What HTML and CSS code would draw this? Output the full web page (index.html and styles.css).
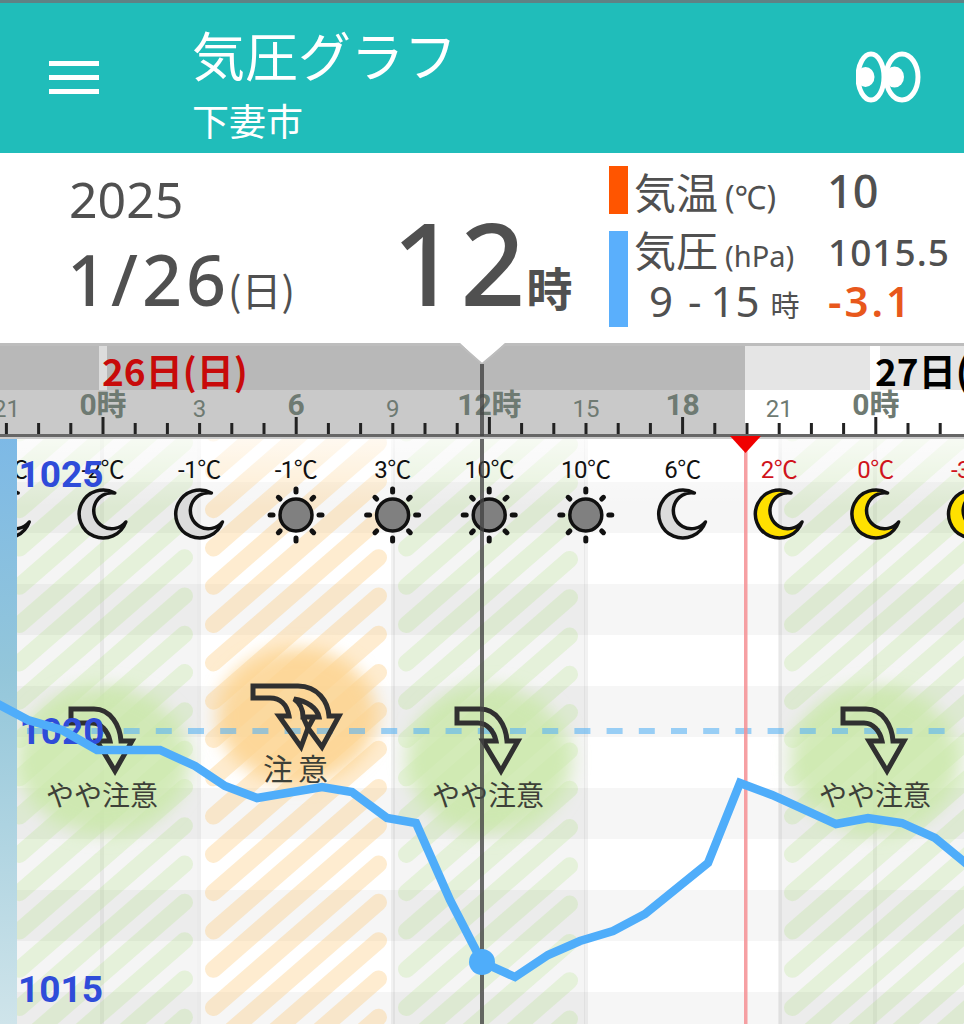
FILE: index.html
```html
<!DOCTYPE html>
<html lang="ja">
<head>
    <meta charset="UTF-8">
    <meta name="viewport" content="width=device-width, initial-scale=1.0">
    <title>気圧グラフ</title>
    <link rel="stylesheet" href="styles.css">
    <script src="chart.js"></script>
</head>
<body>
    <div id="appbar">
        <div class="menu"><span></span><span></span><span></span></div>
        <div class="title">
            <div class="title-main">気圧グラフ</div>
            <div class="title-sub">下妻市</div>
        </div>
        <svg class="eyes" width="66" height="54" viewBox="0 0 66 54">
            <ellipse cx="15" cy="27" rx="13" ry="23"></ellipse>
            <ellipse cx="46" cy="27" rx="16" ry="23"></ellipse>
            <ellipse class="pupil" cx="9.5" cy="27" rx="9" ry="10"></ellipse>
            <ellipse class="pupil" cx="38.5" cy="27" rx="9.5" ry="10.5"></ellipse>
        </svg>
    </div>
    <div id="info">
        <div class="date">
            <div class="year">2025</div>
            <div class="day">1/26<small>(日)</small></div>
        </div>
        <div class="hour">12<small>時</small></div>
        <div class="legend">
            <div class="row temp">
                <div class="bar bar-temp"></div>
                <div class="cells">
                    <div class="line">
                        <span class="label">気温<small class="unit-temp">(℃)</small></span>
                        <span class="value value-temp">10</span>
                    </div>
                </div>
            </div>
            <div class="row press">
                <div class="bar bar-press"></div>
                <div class="cells">
                    <div class="line line-press">
                        <span class="label">気圧<small>(hPa)</small></span>
                        <span class="value">1015.5</span>
                    </div>
                    <div class="line line-range">
                        <span class="label range">9 -&#8201;15<small>時</small></span>
                        <span class="value diff">-3.1</span>
                    </div>
                </div>
            </div>
        </div>
    </div>
    <svg id="graph" width="964" height="681" viewBox="0 343 964 681"></svg>
</body>
</html>
```

FILE: styles.css
```css
html, body{
    margin: 0;
    padding: 0;
    background: white;
}
body{
    width: 964px;
    height: 1024px;
    overflow: hidden;
    font-family: "Noto Sans", "Noto Sans CJK JP", sans-serif;
    color: #505050;
}
#appbar{
    height: 150px;
    border-top: 3px solid #5f8285;
    background: #20bdba;
    display: flex;
    align-items: flex-start;
    color: white;
    font-family: "Noto Sans CJK JP", sans-serif;
}
.menu{
    width: 50px;
    margin: 58px 0 0 49px;
    display: flex;
    flex-direction: column;
    gap: 9px;
}
.menu span{
    height: 5px;
    background: white;
}
.title{
    margin-left: 93px;
    padding-top: 16px;
}
.title-main{
    font-size: 53px;
    line-height: 70px;
    font-weight: 400;
    white-space: nowrap;
}
.title-sub{
    font-size: 37px;
    line-height: 48px;
    margin-top: 7px;
    font-weight: 400;
}
.eyes{
    margin: 47px 0 0 auto;
    margin-right: 42px;
}
.eyes ellipse{
    fill: none;
    stroke: white;
    stroke-width: 5px;
}
.eyes .pupil{
    fill: white;
    stroke: none;
}
#info{
    height: 190px;
    display: flex;
    background: white;
}
.date{
    width: 328px;
    padding: 16px 0 0 69px;
    box-sizing: border-box;
}
.year{
    font-size: 50px;
    line-height: 60px;
}
.day{
    font-size: 70px;
    line-height: 84px;
    margin: 8px 0 0 -2px;
    white-space: nowrap;
    font-weight: 500;
    letter-spacing: 4px;
}
.day small{
    font-size: 40px;
    font-weight: 400;
    margin-left: -2px;
    letter-spacing: 0;
    font-family: "Noto Sans CJK JP", sans-serif;
}
.hour{
    width: 281px;
    font-size: 114px;
    line-height: 128px;
    padding: 45px 0 0 64px;
    box-sizing: border-box;
    white-space: nowrap;
    font-weight: 500;
    letter-spacing: 3px;
}
.hour small{
    font-size: 46px;
    font-weight: 700;
    margin-left: -2px;
    letter-spacing: 0;
    font-family: "Noto Sans CJK JP", sans-serif;
}
.legend{
    flex: 1;
    padding-top: 13px;
    display: flex;
    flex-direction: column;
    gap: 17px;
}
.row{
    display: flex;
    height: 48px;
}
.bar{
    width: 19px;
    flex: none;
}
.bar-temp{
    background: #ff5500;
    height: 48px;
}
.bar-press{
    background: #5aaffc;
    height: 96px;
}
.cells{
    flex: 1;
}
.line{
    height: 48px;
    display: flex;
    align-items: center;
    white-space: nowrap;
}
.line-press{
    height: 40px;
}
.line-press .label{
    margin-top: -6px;
}
.line-range{
    height: 58px;
}
.label{
    width: 194px;
    margin-left: 6px;
    flex: none;
    font-size: 42px;
    font-family: "Noto Sans CJK JP", sans-serif;
}
.label small{
    font-size: 29px;
    margin-left: 7px;
    font-family: "Noto Sans", "Noto Sans CJK JP", sans-serif;
}
.label .unit-temp{
    font-size: 32px;
}
.range{
    padding-left: 15px;
    width: 179px;
    letter-spacing: 1px;
    word-spacing: 2px;
    font-family: "Noto Sans", sans-serif;
}
.range small{
    margin-left: 10px;
    letter-spacing: 0;
    font-family: "Noto Sans CJK JP", sans-serif;
}
.value{
    font-size: 37px;
    letter-spacing: 1px;
    font-weight: 500;
}
.value-temp{
    font-size: 45px;
    letter-spacing: 0;
    margin-left: -1px;
}
.diff{
    color: #e8581c;
    font-size: 42px;
    font-weight: 600;
    letter-spacing: 3px;
}
#graph{
    display: block;
}
#graph text{
    font-family: Roboto, "Noto Sans CJK JP", sans-serif;
    text-anchor: middle;
}
.band{
    fill: #f6f6f6;
}
.zone{
    fill: black;
    fill-opacity: 0.04;
}
.column-line{
    fill: black;
    fill-opacity: 0.05;
}
.blob-green{
    fill: #cbe9a9;
    fill-opacity: 0.8;
}
.blob-orange{
    fill: #fdd48f;
    fill-opacity: 0.85;
}
.stripe-green{
    stroke: #a5e070;
    stroke-opacity: 0.2;
    stroke-width: 17px;
    stroke-linecap: round;
}
.stripe-orange{
    stroke: #fcc570;
    stroke-opacity: 0.33;
    stroke-width: 17px;
    stroke-linecap: round;
}
.dash{
    stroke: #5ab4f5;
    stroke-opacity: 0.6;
    stroke-width: 6px;
    stroke-dasharray: 16 16.2;
}
#graph .temp-label{
    font-size: 24px;
    fill: #111;
    letter-spacing: -0.5px;
}
#graph .temp-label.cold{
    fill: #d0141c;
}
.moon{
    fill: #dcdcdc;
    stroke: #111;
    stroke-width: 3.5px;
    stroke-linejoin: round;
}
.moon.night{
    fill: #ffe000;
}
.sun-body{
    fill: #808080;
    stroke: #111;
    stroke-width: 3.5px;
}
.sun-ray{
    stroke: #111;
    stroke-width: 5px;
    stroke-linecap: round;
}
.now-line{
    fill: #f58f93;
    fill-opacity: 0.85;
}
.panel{
    fill: url(#panelFade);
}
.arrow{
    fill: none;
    stroke: #303030;
    stroke-width: 5px;
    stroke-linejoin: miter;
}
#graph .warn-label{
    font-family: "Noto Sans CJK JP", sans-serif;
    font-size: 28px;
    fill: #3d4038;
}
#graph .warn-wide{
    font-size: 30px;
    letter-spacing: 5px;
}
.pressure{
    fill: none;
    stroke: #4fadfa;
    stroke-width: 8.5px;
    stroke-linejoin: miter;
}
.pressure-dot{
    fill: #4fadfa;
}
#graph .axis-label{
    font-size: 37px;
    font-weight: 700;
    fill: #2f4cd9;
}
.cursor{
    fill: #444;
    fill-opacity: 0.8;
}
.ruler-white{
    fill: white;
}
.ruler-past{
    fill: #c9c9c9;
}
.ruler-day-past{
    fill: #b8b8b8;
}
.ruler-day-future{
    fill: #e5e5e5;
}
.ruler-gap{
    fill: #dcdcdc;
}
.ruler-top{
    fill: #bdbdbd;
}
.ruler-base{
    fill: #666;
}
.ruler-shadow{
    fill: #ccc;
}
.tick{
    fill: #222;
}
#graph .hour-label{
    font-size: 24px;
    fill: #6e7a72;
}
#graph .hour-label.major{
    font-size: 30px;
    font-weight: 700;
}
#graph .day-label{
    font-family: "Noto Sans CJK JP", sans-serif;
    font-size: 37px;
    font-weight: 700;
    text-anchor: start;
}
#graph .day-label.sunday{
    fill: #c80a0a;
}
#graph .day-label.monday{
    fill: black;
}
.notch{
    fill: white;
}
.notch-edge{
    fill: none;
    stroke: #bdbdbd;
    stroke-width: 2px;
}
.now-mark{
    fill: #f00000;
}
```

FILE: chart.js
```js
let tag; //svg 文字列

const STEP = 32.2; //1時間の幅
const TOP = 437; //グラフ領域の上端
const BOTTOM = 1024;

function hourX(i){
    return 103 + STEP * i;
}

function rect(cls, x, y, w, h){
    tag += "<rect class=\"" + cls + "\" x=\"" + x + "\" y=\"" + y + "\" width=\"" + w + "\" height=\"" + h + "\"></rect>";
}

function text(cls, x, y, str){
    tag += "<text class=\"" + cls + "\" x=\"" + x + "\" y=\"" + y + "\">" + str + "</text>";
}

function bands(){
    for(let y = 482; y < BOTTOM; y += 102){
        rect("band", 0, y, 964, 51);
    }
    rect("zone", 0, TOP, 197, 587);
    rect("zone", 393, TOP, 192, 587);
    rect("zone", 779, TOP, 185, 587);
    [100, 197, 391, 584, 778, 873].forEach(function(x){
        rect("column-line", x, TOP, 4, 587);
    });
}

function blobs(){
    tag += "<ellipse class=\"blob-green\" filter=\"url(#soft)\" cx=\"103\" cy=\"760\" rx=\"86\" ry=\"74\"></ellipse>";
    tag += "<ellipse class=\"blob-orange\" filter=\"url(#soft)\" cx=\"297\" cy=\"716\" rx=\"80\" ry=\"68\"></ellipse>";
    tag += "<ellipse class=\"blob-green\" filter=\"url(#soft)\" cx=\"489\" cy=\"760\" rx=\"82\" ry=\"74\"></ellipse>";
    tag += "<ellipse class=\"blob-green\" filter=\"url(#soft)\" cx=\"875\" cy=\"760\" rx=\"84\" ry=\"74\"></ellipse>";
}

//斜線は列ごとに両端を丸めて描く
function stripes(cls, left, right){
    let rise = 0.87 * (right - left - 17);
    for(let y = 548 - 38.3 * 8; y < BOTTOM + rise; y += 38.3){
        tag += "<line class=\"" + cls + "\" x1=\"" + (left + 8.5) + "\" y1=\"" + y + "\" x2=\"" + (right - 8.5) + "\" y2=\"" + (y - rise) + "\"></line>";
    }
}

function moon(x, cls){
    tag += "<path class=\"moon " + cls + "\" transform=\"translate(" + x + " 515)\" d=\"M12,-22 A24,24 0 1 0 23,7 A18,18 0 1 1 12,-22 Z\"></path>";
}

function sun(x){
    tag += "<g transform=\"translate(" + x + " 515)\">";
    for(let a = 0; a < 8; a++){
        let inner = a % 2 == 0 ? 23 : 22.5;
        let outer = a % 2 == 0 ? 26 : 25;
        let r = a * Math.PI / 4;
        tag += "<line class=\"sun-ray\" x1=\"" + inner * Math.cos(r) + "\" y1=\"" + inner * Math.sin(r) + "\" x2=\"" + outer * Math.cos(r) + "\" y2=\"" + outer * Math.sin(r) + "\"></line>";
    }
    tag += "<circle class=\"sun-body\" r=\"16\"></circle></g>";
}

function weather(){
    let list = [
        [-1, "-4℃", "m", ""], [0, "-2℃", "m", ""], [1, "-1℃", "m", ""], [2, "-1℃", "s", ""],
        [3, "3℃", "s", ""], [4, "10℃", "s", ""], [5, "10℃", "s", ""], [6, "6℃", "m", ""],
        [7, "2℃", "n", "cold"], [8, "0℃", "n", "cold"], [9, "-3℃", "n", "cold"]
    ];
    for(let i = 0; i < list.length; i++){
        let x = 102.8 + 96.6 * list[i][0];
        text("temp-label " + list[i][3], x, 478, list[i][1]);
        if(list[i][2] == "s"){
            sun(x);
        }else{
            moon(x, list[i][2] == "n" ? "night" : "");
        }
    }
}

function arrow(dx){
    tag += "<path class=\"arrow\" transform=\"translate(" + dx + " 0)\" d=\"M457,709 H480 C497,709 506,726 507,741 H518 L501,771 L483,741 H496 C494,731 487,723 478,723 H457 Z\"></path>";
}

function warnings(){
    arrow(-386);
    arrow(0);
    arrow(386);
    tag += "<path class=\"arrow\" d=\"M253,686 H298 C318,686 328,702 329,716 H339 L322,747 L308,728 L301,747 L279,716 H289 C287,704 280,698 270,698 H253 Z\"></path>";
    tag += "<path class=\"arrow\" d=\"M294,699 C307,701 317,708 319,717 H303 C303,709 300,703 294,699 Z M303,717 L308,728 L314,717\"></path>";
    text("warn-label", 102, 806, "やや注意");
    text("warn-label warn-wide", 298, 780, "注意");
    text("warn-label", 488, 806, "やや注意");
    text("warn-label", 875, 806, "やや注意");
}

function pressure(){
    let pts = "-4,703 28,720 62,730 97,750 160,750 195,766 225,786 257,798 322,787 352,792 387,818 416,823 450,900 482,962 515,977 548,955 580,941 613,931 645,914 708,863 740,783 772,795 836,824 868,818 902,823 935,838 968,865";
    tag += "<polyline class=\"pressure\" points=\"" + pts + "\"></polyline>";
}

function ruler(){
    rect("ruler-white", 0, 343, 964, 94);
    rect("ruler-day-past", 0, 346, 745, 44);
    rect("ruler-gap", 99, 346, 8, 44);
    rect("ruler-day-future", 745, 346, 125, 44);
    rect("ruler-day-future", 880, 346, 84, 44);
    rect("ruler-past", 0, 390, 745, 44);
    rect("ruler-top", 0, 343, 964, 3);
    rect("ruler-base", 0, 434, 964, 3);
    rect("ruler-shadow", 0, 437, 964, 2);

    text("day-label sunday", 102, 386, "26日(日)");
    text("day-label monday", 875, 386, "27日(日)");

    for(let i = -3; i < 27; i++){
        let major = (i % 6 == 0);
        let top = major ? 417 : 423;
        rect("tick", hourX(i) - 1.5, top, 3, 434 - top);
    }
    let hours = [
        [-1, "21", false], [0, "0時", true], [1, "3", false], [2, "6", true], [3, "9", false],
        [4, "12時", true], [5, "15", false], [6, "18", true], [7, "21", false], [8, "0時", true]
    ];
    for(let i = 0; i < hours.length; i++){
        let x = hourX(hours[i][0] * 3);
        text(hours[i][2] ? "hour-label major" : "hour-label", x, hours[i][2] ? 415 : 417, hours[i][1]);
    }
}

function draw(){
    tag = "";
    tag += "<defs>";
    tag += "<filter id=\"soft\" x=\"-20%\" y=\"-20%\" width=\"140%\" height=\"140%\"><feGaussianBlur stdDeviation=\"9\"></feGaussianBlur></filter>";
    tag += "<linearGradient id=\"panelFade\" x1=\"0\" y1=\"0\" x2=\"0\" y2=\"1\">";
    tag += "<stop offset=\"0\" stop-color=\"#7db9e6\"></stop><stop offset=\"0.4\" stop-color=\"#93c6da\"></stop><stop offset=\"1\" stop-color=\"#cfe4ea\"></stop>";
    tag += "</linearGradient>";
    tag += "<linearGradient id=\"topFade\" x1=\"0\" y1=\"0\" x2=\"0\" y2=\"1\">";
    tag += "<stop offset=\"0\" stop-color=\"white\" stop-opacity=\"0.7\"></stop><stop offset=\"1\" stop-color=\"white\" stop-opacity=\"0\"></stop>";
    tag += "</linearGradient>";
    tag += "</defs>";

    bands();
    stripes("stripe-green", 11, 193);
    stripes("stripe-orange", 205, 387);
    stripes("stripe-green", 398, 578);
    stripes("stripe-green", 784, 1170);
    blobs();
    tag += "<rect fill=\"url(#topFade)\" x=\"0\" y=\"437\" width=\"964\" height=\"70\"></rect>";
    tag += "<line class=\"dash\" x1=\"27\" y1=\"731\" x2=\"945\" y2=\"731\"></line>";
    rect("now-line", 744, 450, 3.5, 574);
    weather();
    rect("panel", 0, TOP, 17, 587);
    warnings();
    text("axis-label", 61, 487, "1025");
    text("axis-label", 62, 744, "1020");
    pressure();
    text("axis-label", 60.5, 1002, "1015");
    rect("cursor", 480, 363, 4, 661);
    tag += "<circle class=\"pressure-dot\" cx=\"482\" cy=\"962\" r=\"13\"></circle>";
    ruler();
    tag += "<path class=\"now-mark\" d=\"M730,436 H761 L745.5,453 Z\"></path>";
    tag += "<path class=\"notch\" d=\"M459,342 H506 L482,364 Z\"></path>";
    tag += "<path class=\"notch-edge\" d=\"M459,344 L482,364 L506,344\"></path>";
    rect("cursor", 480, 364, 4, 72);

    document.getElementById("graph").innerHTML = tag;
}

addEventListener("load", function(){
    draw();
});
```
